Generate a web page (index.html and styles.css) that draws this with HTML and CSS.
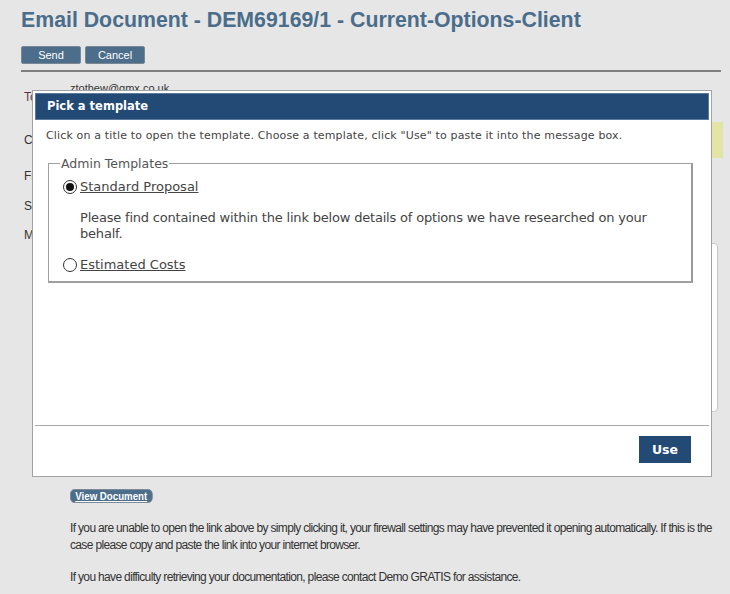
FILE: index.html
```html
<!DOCTYPE html>
<html>
<head>
<meta charset="utf-8">
<link rel="stylesheet" href="styles.css">
</head>
<body>
<div class="page">
  <h1 class="title">Email Document - DEM69169/1 - Current-Options-Client</h1>
  <div class="actions">
    <button class="btn">Send</button>
    <button class="btn">Cancel</button>
  </div>
  <div class="rule"></div>
  <div class="fields">
    <div class="row row-to">
      <span class="lbl lbl-to">To</span>
      <div class="val">
        <div class="email">ztothew@gmx.co.uk</div>
        <div class="email">&nbsp;</div>
      </div>
    </div>
    <div class="row row-cc">
      <span class="lbl">Cc</span>
      <div class="val"><div class="cc-input"></div></div>
    </div>
    <div class="row row-from">
      <span class="lbl">From</span>
      <div class="val"></div>
    </div>
    <div class="row row-subj">
      <span class="lbl">Subject</span>
      <div class="val"></div>
    </div>
    <div class="row row-msg">
      <span class="lbl">Message</span>
      <div class="val"><div class="msg-box"></div></div>
    </div>
  </div>
  <div class="doc">
    <a class="view-btn" href="#">View Document</a>
    <p class="note">If you are unable to open the link above by simply clicking it, your firewall settings may have prevented it opening automatically. If this is the case please copy and paste the link into your internet browser.</p>
    <p class="note">If you have difficulty retrieving your documentation, please contact Demo GRATIS for assistance.</p>
  </div>
</div>

<div class="dialog">
  <div class="dlg-head">Pick a template</div>
  <div class="dlg-body">
    <p class="hint">Click on a title to open the template. Choose a template, click "Use" to paste it into the message box.</p>
    <fieldset class="group">
      <legend>Admin Templates</legend>
      <label class="opt"><input type="radio" name="tpl" checked><a href="#">Standard Proposal</a></label>
      <p class="desc">Please find contained within the link below details of options we have researched on your behalf.</p>
      <label class="opt"><input type="radio" name="tpl"><a href="#">Estimated Costs</a></label>
    </fieldset>
  </div>
  <div class="dlg-foot">
    <button class="use-btn">Use</button>
  </div>
</div>
</body>
</html>
```

FILE: styles.css
```css
html, body {
  margin: 0;
  padding: 0;
  background: #e6e6e6;
}
body {
  font-family: "Liberation Sans", Arial, sans-serif;
  color: #333;
  position: relative;
  width: 730px;
  height: 594px;
  overflow: hidden;
}
.page {
  padding: 8px 9px 0 21px;
}
.title {
  margin: 0;
  font-size: 21.3px;
  font-weight: bold;
  color: #4a6d8b;
  line-height: 25px;
}
.actions {
  display: flex;
  gap: 4px;
  margin-top: 13px;
}
.btn {
  width: 60px;
  height: 18px;
  padding: 0;
  background: #4c6e8b;
  color: #fff;
  border: 1px solid #7a8794;
  border-radius: 2px;
  font-family: "Liberation Sans", Arial, sans-serif;
  font-size: 11px;
}
.rule {
  height: 2px;
  background: #7f7f7f;
  margin-top: 6px;
}
.fields {
  display: flex;
  flex-direction: column;
}
.row {
  display: grid;
  grid-template-columns: 49px 1fr;
  align-items: center;
  font-size: 12px;
}
.lbl { color: #333; padding-left: 3px; line-height: 14px; }
.lbl-to { color: #5b3344; position: relative; top: 2px; }
.row-to { padding-top: 10px; }
.email { font-size: 11px; color: #333; line-height: 13px; }
.row-cc { margin-top: 14px; }
.cc-input {
  height: 36px;
  background: #e4e4a6;
  margin-right: -2px;
}
.row-from { height: 30px; margin-top: 3px; }
.row-subj { height: 29px; }
.row-msg { align-items: start; }
.row-msg .lbl { margin-top: 8px; }
.msg-box {
  margin-top: 23px;
  margin-right: 3px;
  height: 167px;
  border: 1px solid #c9c9c9;
  border-radius: 4px;
  background: #fff;
}
.doc {
  padding-left: 49px;
  margin-top: 74px;
}
.view-btn {
  display: inline-block;
  background: #4c6e8b;
  color: #fff;
  font-size: 11px;
  font-weight: bold;
  line-height: 12px;
  padding: 0 5px;
  border: 1px solid #7a8794;
  border-radius: 5px;
  text-decoration: underline;
  transform: scaleX(0.88);
  transform-origin: left;
}
.note {
  font-size: 12px;
  line-height: 17px;
  margin: 15px 0 0 0;
  color: #333;
  letter-spacing: -0.66px;
}
.doc .note:first-of-type { margin-top: 16px; }

/* dialog overlay */
.dialog {
  position: absolute;
  left: 32px;
  top: 90px;
  width: 674px;
  height: 381px;
  padding: 2px;
  background: #fff;
  border: 1px solid #a3a3a3;
  display: flex;
  flex-direction: column;
  font-family: "DejaVu Sans", Verdana, sans-serif;
}
.dlg-head {
  height: 25px;
  flex: none;
  background: #224a75;
  border: 1px solid #5d7a9d;
  color: #fff;
  font-weight: bold;
  font-size: 11.5px;
  line-height: 25px;
  padding-left: 11px;
}
.dlg-body {
  flex: 1;
  padding: 0 16px 0 13px;
}
.hint {
  font-size: 11px;
  letter-spacing: 0.15px;
  color: #444;
  margin: 9px 0 0 -2px;
  line-height: 14px;
}
.group {
  margin: 13px 0 0 0;
  padding: 0 0 8px 14px;
  border: 1px solid #a0a0a0;
  border-right-width: 2px;
  border-bottom-width: 2px;
  border-right-color: #9a9a9a;
}
.group legend {
  font-size: 12.5px;
  color: #555;
  padding: 0 1px;
  margin-left: -3px;
}
.opt {
  display: flex;
  align-items: center;
  font-size: 13px;
  line-height: 16px;
}
.opt:first-of-type { margin-top: 8px; }
.opt input {
  -webkit-appearance: none;
  appearance: none;
  margin: 0 3px 0 0;
  width: 14px;
  height: 14px;
  border: 1px solid #333;
  border-radius: 50%;
  background: #fff;
  box-sizing: border-box;
  display: flex;
  align-items: center;
  justify-content: center;
}
.opt input:checked::after {
  content: "";
  width: 8px;
  height: 8px;
  border-radius: 50%;
  background: #111;
}
.opt a {
  color: #444;
  text-decoration: underline;
}
.desc {
  font-size: 13px;
  letter-spacing: -0.19px;
  color: #444;
  line-height: 16px;
  margin: 15px 0 15px 17px;
}
.dlg-foot {
  flex: none;
  border-top: 1px solid #a8a8a8;
  display: flex;
  justify-content: flex-end;
  padding: 10px 18px 11px 0;
}
.use-btn {
  width: 52px;
  height: 27px;
  background: #224a75;
  border: none;
  color: #fff;
  font-family: "DejaVu Sans", Verdana, sans-serif;
  font-weight: bold;
  font-size: 12.5px;
  padding: 0;
}
```
